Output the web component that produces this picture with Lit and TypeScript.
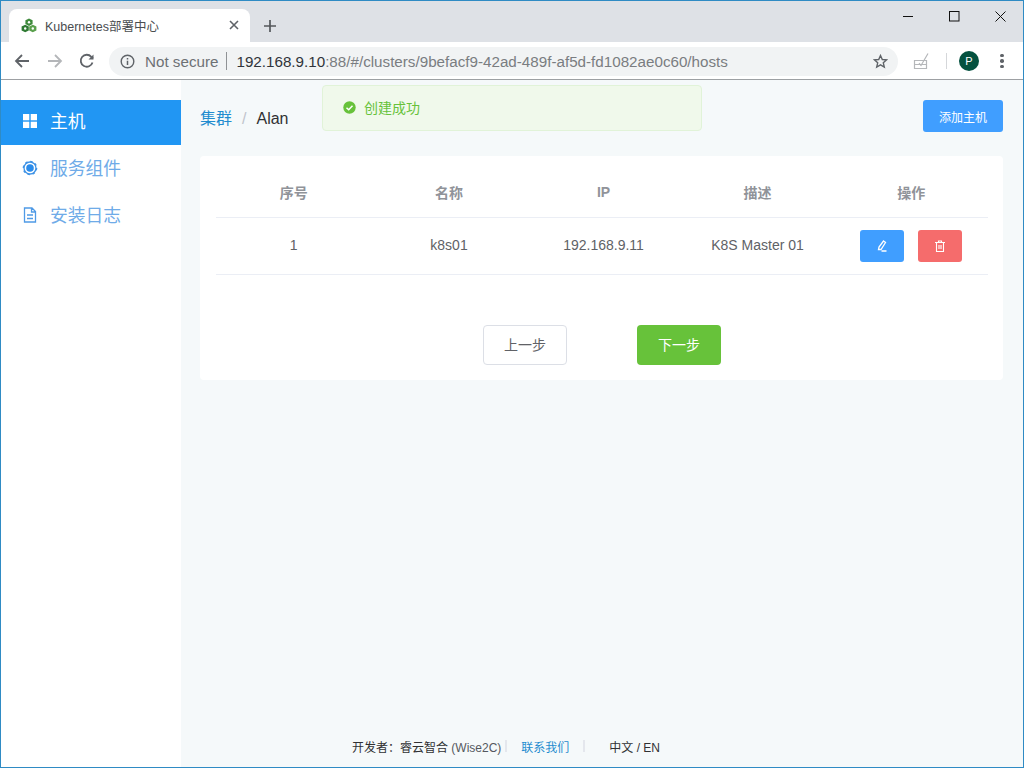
import { LitElement, html, css } from "lit";
import { customElement } from "lit/decorators.js";

const FONT = css`"Liberation Sans", "Noto Sans CJK SC", sans-serif`;

@customElement("app-root")
export class AppRoot extends LitElement {
  static styles = css`
    :host { display: block; width: 1024px; height: 768px; font-family: ${FONT}; position: relative; overflow: hidden; }
    * { box-sizing: border-box; }
    .win { width: 1024px; height: 768px; border: 1px solid #2f8bc4; display: flex; flex-direction: column; background: #fff; position: relative; }
    .strip { height: 41px; background: #dee1e6; display: flex; align-items: flex-end; padding-left: 8px; position: relative; flex: none; }
    .tab { width: 241px; height: 33px; background: #fff; border-radius: 8px 8px 0 0; display: flex; align-items: center; padding: 0 0 1px 12px; font-size: 12.5px; color: #4a4d50; }
    .tab svg.fav { margin-right: 8px; flex: none; }
    .tab .t { flex: 1; white-space: nowrap; }
    .tab .x { margin-right: 11px; display: flex; }
    .plus { margin: 0 0 10px 14px; display: flex; }
    .wc { position: absolute; right: 0; top: 0; display: flex; height: 30px; }
    .wc div { width: 46px; height: 30px; display: flex; align-items: center; justify-content: center; }
    .toolbar { height: 38px; background: #fff; border-bottom: 1px solid #9da0a3; display: flex; align-items: center; flex: none; position: relative; padding: 1px 0 0 12px; }
    .nav { display: flex; gap: 15px; margin-right: 14px; align-items: center; }
    .nav svg { display: block; }
    .omni { width: 789px; height: 29px; background: #f1f3f4; border-radius: 15px; display: flex; align-items: center; padding-left: 11px; font-size: 15.2px; }
    .omni .ns { color: #6d7074; margin-left: 10px; }
    .omni .sep { width: 1px; height: 18px; background: #8f9295; margin: 0 9px 0 8px; }
    .omni .host { color: #30333a; }
    .omni .path { color: #7a7d81; }
    .omni .url { flex: 1; white-space: nowrap; }
    .omni .star { margin-right: 10px; display: flex; }
    .tools { display: flex; align-items: center; margin-left: 15px; }
    .avatar { width: 20px; height: 20px; border-radius: 50%; background: #04513f; color: #fff; font-size: 11px; display: flex; align-items: center; justify-content: center; }
    .tsep { width: 1px; height: 16px; background: #d5d7da; margin: 0 12px 0 17px; }
    .dots { margin-left: 21px; display: flex; flex-direction: column; gap: 2px; }
    .dots i { width: 3.500px; height: 3.500px; border-radius: 50%; background: #5f6368; display: block; }

    .main { flex: 1; display: flex; min-height: 0; }
    .side { width: 180px; background: #fff; padding-top: 20px; flex: none; }
    .item { height: 47px; display: flex; align-items: center; padding: 0 0 1px 21px; color: #6fabe8; font-size: 17.800px; }
    .item svg { margin-right: 12px; flex: none; }
    .item span { padding-bottom: 2px; }
    .item.on { height: 45px; background: #2196f3; color: #fff; padding-bottom: 3px; }
    .content { flex: 1; background: #f5f9fa; padding: 20px 20px 0 19px; display: flex; flex-direction: column; min-width: 0; position: relative; }
    .head { display: flex; align-items: flex-start; justify-content: space-between; height: 32px; margin-bottom: 24px; }
    .crumb { font-size: 16px; line-height: 38px; display: flex; color: #303133; }
    .crumb a { color: #1f8ccf; }
    .crumb .s { color: #c0c4cc; margin: 0 10px; }
    .add { width: 80px; height: 32px; background: #409eff; color: #fff; font-size: 12px; border-radius: 3px; display: flex; align-items: center; justify-content: center; }
    .card { width: 803px; height: 224px; background: #fff; border-radius: 4px; padding: 0 15px 0 16px; }
    .row { display: grid; grid-template-columns: 155.500px 155px 154px 154px 153.500px; border-bottom: 1px solid #ebeef5; align-items: center; text-align: center; color: #606266; }
    .row.h { height: 62px; font-size: 14px; font-weight: 700; color: #909399; padding-top: 11px; }
    .row.b { height: 57px; font-size: 14px; }
    .row.b .c { padding-bottom: 2px; }
    .ops { display: flex; justify-content: center; gap: 14px; }
    .ib { width: 44px; height: 32px; border-radius: 3px; display: flex; align-items: center; justify-content: center; }
    .ib.e { background: #409eff; }
    .ib.d { background: #f56c6c; }
    .steps { display: flex; justify-content: center; gap: 70px; margin-top: 50px; }
    .btn { width: 84px; height: 40px; border-radius: 4px; display: flex; align-items: center; justify-content: center; font-size: 14px; padding-bottom: 2px; }
    .btn.p { border: 1px solid #dcdfe6; color: #606266; background: #fff; }
    .btn.n { background: #67c23a; color: #fff; }
    .footer { margin-top: auto; height: 41px; display: flex; align-items: flex-start; font-size: 12px; color: #303133; padding: 12px 0 0 152px; white-space: nowrap; }
    .footer .w { color: #54585e; }
    .footer .bar { width: 2px; height: 12px; background: #e4e7ed; margin: 2px 0 0 4px; }
    .footer a { color: #1f8ccf; margin: 0 10px 0 14px; }
    .footer .lang { margin-left: 24px; }
    .toast { position: absolute; left: 321px; top: 84px; width: 380px; height: 46px; background: #f0f9eb; border: 1px solid #e1f3d8; border-radius: 4px; display: flex; align-items: center; padding: 0 0 2px 20px; color: #67c23a; font-size: 14px; }
    .toast svg { margin-right: 8px; }
  `;

  render() {
    return html`<div class="win">
      <div class="strip">
        <div class="tab">
          <svg class="fav" width="16" height="15" viewBox="0 0 16 15">
            <path d="M8 .5l3.600 1.800v3.800L8 8 4.400 6.100V2.300z" fill="#3f8a3c"/><path d="M4.200 6.700l3.600 1.900v3.800L4.200 14.300.6 12.400V8.600z" fill="#2f7a33"/><path d="M11.800 6.700l3.600 1.900v3.800l-3.600 1.900-3.600-1.900V8.600z" fill="#5aa04d"/>
            <circle cx="8" cy="4.200" r="1.200" fill="#fff"/><circle cx="4.200" cy="10.500" r="1.200" fill="#fff"/><circle cx="11.800" cy="10.500" r="1.200" fill="#fff"/>
          </svg>
          <span class="t">Kubernetes部署中心</span>
          <span class="x"><svg width="10" height="10" viewBox="0 0 10 10"><path d="M1 1l8 8M9 1l-8 8" stroke="#5f6368" stroke-width="1.600"/></svg></span>
        </div>
        <span class="plus"><svg width="12" height="12" viewBox="0 0 12 12"><path d="M6 0v12M0 6h12" stroke="#54575b" stroke-width="1.700"/></svg></span>
        <div class="wc">
          <div><svg width="11" height="11" viewBox="0 0 11 11"><path d="M0 5.500h10" stroke="#111" stroke-width="1"/></svg></div>
          <div><svg width="11" height="11" viewBox="0 0 11 11"><rect x=".5" y=".5" width="9.500" height="9.500" fill="none" stroke="#111"/></svg></div>
          <div><svg width="11" height="11" viewBox="0 0 11 11"><path d="M.5.500l10 10M10.500.500l-10 10" stroke="#111" stroke-width="1"/></svg></div>
        </div>
      </div>
      <div class="toolbar">
        <div class="nav">
          <svg width="18" height="16" viewBox="0 0 18 16"><path d="M16 8H3M9 2L3 8l6 6" fill="none" stroke="#5f6368" stroke-width="1.800"/></svg>
          <svg width="18" height="16" viewBox="0 0 18 16"><path d="M2 8h13M9 2l6 6-6 6" fill="none" stroke="#b4b6b9" stroke-width="1.800"/></svg>
          <svg width="16" height="16" viewBox="0 0 16 16"><path d="M13.500 9.500A6 6 0 1 1 12.300 3.800L14 5.500" fill="none" stroke="#5f6368" stroke-width="1.800"/><path d="M14.500 1.500v5h-5z" fill="#5f6368"/></svg>
        </div>
        <div class="omni">
          <svg width="15" height="15" viewBox="0 0 15 15"><circle cx="7.500" cy="7.500" r="6.300" fill="none" stroke="#5f6368" stroke-width="1.400"/><path d="M7.500 6.700v4.300M7.500 4v1.600" stroke="#5f6368" stroke-width="1.500"/></svg>
          <span class="ns">Not secure</span><span class="sep"></span>
          <span class="url"><span class="host">192.168.9.10</span><span class="path">:88/#/clusters/9befacf9-42ad-489f-af5d-fd1082ae0c60/hosts</span></span>
          <span class="star"><svg width="15" height="15" viewBox="0 0 15 15"><path d="M7.500 1.500l1.800 4 4.300.4-3.300 2.900 1 4.200-3.800-2.200-3.800 2.200 1-4.200L1.400 5.900l4.300-.4z" fill="none" stroke="#5f6368" stroke-width="1.400"/></svg></span>
        </div>
        <div class="tools">
          <svg width="16" height="18" viewBox="0 0 16 18"><path d="M1.500 8.500h12v8h-12zM1.500 12.500h12" fill="none" stroke="#b5b7ba" stroke-width="1.200"/><path d="M6 11l2 2.500L15 1.500" fill="none" stroke="#b5b7ba" stroke-width="1.200"/></svg>
          <span class="tsep"></span>
          <span class="avatar">P</span>
          <span class="dots"><i></i><i></i><i></i></span>
        </div>
      </div>
      <div class="main">
        <div class="side">
          <div class="item on"><svg width="16" height="16" viewBox="0 0 16 16" fill="#fff"><rect x="1" y="1" width="6.300" height="6.300"/><rect x="8.700" y="1" width="6.300" height="6.300"/><rect x="1" y="8.700" width="6.300" height="6.300"/><rect x="8.700" y="8.700" width="6.300" height="6.300"/></svg><span>主机</span></div>
          <div class="item"><svg width="16" height="16" viewBox="0 0 16 16"><circle cx="8" cy="8" r="6" fill="none" stroke="#3f93e6" stroke-width="1.300"/><circle cx="8" cy="8" r="6.600" fill="none" stroke="#3f93e6" stroke-width="1.400" stroke-dasharray="2.400 2.780"/><circle cx="8" cy="8" r="3.800" fill="#2b8ceb"/></svg><span>服务组件</span></div>
          <div class="item"><svg width="16" height="16" viewBox="0 0 16 16"><path d="M2.500 1h7.500l3.500 3.500V15h-11z M9.500 1v4h4 M5 8h6M5 11.500h6" fill="none" stroke="#4f9ae6" stroke-width="1.300"/></svg><span>安装日志</span></div>
        </div>
        <div class="content">
          <div class="head">
            <div class="crumb"><a>集群</a><span class="s">/</span><span>Alan</span></div>
            <div class="add">添加主机</div>
          </div>
          <div class="card">
            <div class="row h"><div>序号</div><div>名称</div><div>IP</div><div>描述</div><div>操作</div></div>
            <div class="row b"><div class="c">1</div><div class="c">k8s01</div><div class="c">192.168.9.11</div><div class="c">K8S Master 01</div>
              <div class="ops">
                <div class="ib e"><svg width="12" height="12" viewBox="0 0 12 12"><path d="M7.500 1l2 1.500L5 9.500H2.500L3 7z M5.500 11h5" fill="none" stroke="#fff" stroke-width="1.300"/></svg></div>
                <div class="ib d"><svg width="12" height="12" viewBox="0 0 12 12"><path d="M1 2.500h10M4.500 2.500V1h3v1.500M2.500 2.500v9h7v-9M5 5v4M7 5v4" fill="none" stroke="#fff" stroke-width="1.100"/></svg></div>
              </div>
            </div>
            <div class="steps"><div class="btn p">上一步</div><div class="btn n">下一步</div></div>
          </div>
          <div class="footer">
            <span>开发者：睿云智合 <span class="w">(Wise2C)</span></span><span class="bar"></span>
            <a>联系我们</a><span class="bar"></span>
            <span class="lang">中文 / EN</span>
          </div>
        </div>
      </div>
      <div class="toast">
        <svg width="13" height="13" viewBox="0 0 13 13"><circle cx="6.500" cy="6.500" r="6.200" fill="#67c23a"/><path d="M3.500 6.700l2.200 2.100 3.800-4" fill="none" stroke="#fff" stroke-width="1.500"/></svg>
        创建成功
      </div>
    </div>`;
  }
}
